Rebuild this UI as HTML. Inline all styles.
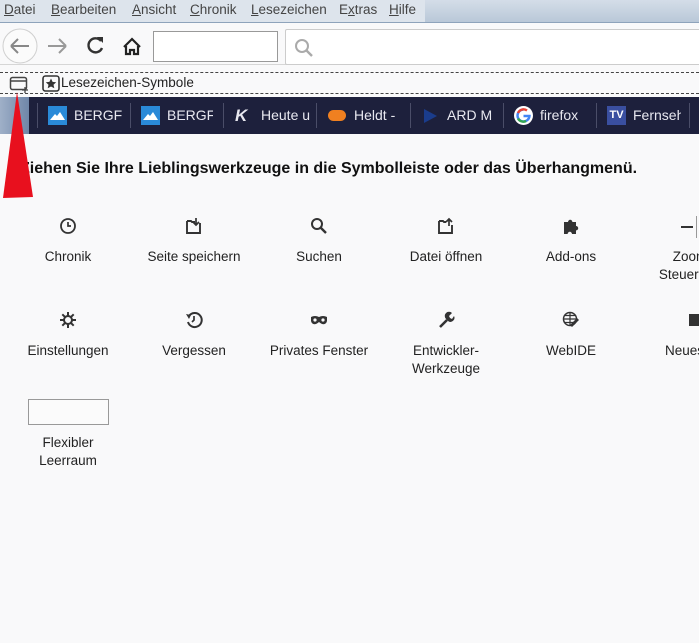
<!DOCTYPE html>
<html><head><meta charset="utf-8"><style>
*{margin:0;padding:0;box-sizing:border-box}
body{width:699px;height:643px;overflow:hidden;background:#f9f9fa;font-family:"Liberation Sans",sans-serif;position:relative;color:#222}
.a{position:absolute}
.menu{left:0;top:0;width:699px;height:23px;background:linear-gradient(#d4dde8,#b9c8d8);border-bottom:1px solid #8ea3bb}
.menu .hl{left:0;top:0;width:425px;height:22px;background:#dde4ec}
.menu span{position:absolute;top:2px;font-size:13.5px;color:#444}
.menu span u{text-decoration:underline}
.tb{left:0;top:23px;width:699px;height:42px;background:#f9f9fa;border-bottom:1px solid #d6d6d6}
.bm{left:0;top:97px;width:699px;height:37px;background:#1d203c}
.bm .it{position:absolute;top:0;height:37px;color:#e8e8f0;font-size:14px;line-height:37px}
.sep{position:absolute;top:6px;width:1px;height:25px;background:#4a4d68}
.lbl{position:absolute;font-size:13.5px;color:#222;text-align:center;width:130px;line-height:18px}
.ic{position:absolute}
</style></head><body>
<div class="a menu"><div class="a hl"></div>
<span style="left:4px"><u>D</u>atei</span>
<span style="left:51px"><u>B</u>earbeiten</span>
<span style="left:132px"><u>A</u>nsicht</span>
<span style="left:190px"><u>C</u>hronik</span>
<span style="left:251px"><u>L</u>esezeichen</span>
<span style="left:339px">E<u>x</u>tras</span>
<span style="left:389px"><u>H</u>ilfe</span>
</div>
<div class="a tb">
<svg class="a" style="left:0;top:0" width="150" height="42">
<circle cx="20" cy="23" r="17" fill="#fbfbfb" stroke="#cfcfcf"/>
<path d="M11 23H29M11 23l7-7M11 23l7 7" stroke="#888" stroke-width="2" fill="none"/>
<path d="M48 23H66M66 23l-7-7M66 23l-7 7" stroke="#999" stroke-width="2" fill="none"/>
<path d="M101 18a7 7 0 1 0 1 7" stroke="#333" stroke-width="2.4" fill="none"/><path d="M97 14h6v6z" fill="#333"/>
<path d="M124 24l8-8 8 8M126 23v8h4v-4h4v4h4v-8" stroke="#222" stroke-width="2.2" fill="none"/>
</svg>
<div class="a" style="left:153px;top:8px;width:125px;height:31px;border:1px solid #999;background:#fff"></div>
<div class="a" style="left:285px;top:6px;width:420px;height:36px;border:1px solid #ccc;background:#fff;border-radius:2px"></div>
<svg class="a" style="left:293px;top:14px" width="22" height="22"><circle cx="9" cy="9" r="6" stroke="#aaa" stroke-width="2" fill="none"/><path d="M13 13l6 6" stroke="#aaa" stroke-width="2.4"/></svg>
</div>
<div class="a" style="left:0;top:72px;width:699px;border-top:1px dashed #444"></div>
<div class="a" style="left:0;top:93px;width:699px;border-top:1px dashed #444"></div>
<svg class="a" style="left:9px;top:75px" width="22" height="18"><rect x="1.5" y="2.5" width="16" height="12" rx="2" fill="none" stroke="#444" stroke-width="1.5"/><path d="M1.5 6h16" stroke="#444" stroke-width="1.5"/><path d="M16 12v6M13 15h6" stroke="#444" stroke-width="1.3"/></svg>
<svg class="a" style="left:42px;top:75px" width="18" height="17"><rect x="1" y="1" width="16" height="15" rx="2.5" fill="none" stroke="#333" stroke-width="1.6"/><path d="M9 3.5l1.6 3.4 3.6.4-2.7 2.4.8 3.6L9 11.5l-3.3 1.8.8-3.6-2.7-2.4 3.6-.4z" fill="#333"/></svg>
<div class="a" style="left:61px;top:75px;font-size:13.5px;color:#222">Lesezeichen-Symbole</div>
<div class="a bm">
<div class="a" style="left:0;top:0;width:29px;height:37px;background:linear-gradient(90deg,#9fb0c8,#6f86a8)"></div>
<div class="sep" style="left:37px"></div>
<div class="a" style="left:48px;top:9px;width:19px;height:19px;background:#2a8ad8"><svg width="19" height="19"><path d="M2 14l5-6 2 2 3-4 5 8z" fill="#fff"/></svg></div>
<div class="it" style="left:74px;width:48px;overflow:hidden;white-space:nowrap">BERGFE</div>
<div class="sep" style="left:130px"></div>
<div class="a" style="left:141px;top:9px;width:19px;height:19px;background:#2a8ad8"><svg width="19" height="19"><path d="M2 14l5-6 2 2 3-4 5 8z" fill="#fff"/></svg></div>
<div class="it" style="left:167px;width:46px;overflow:hidden;white-space:nowrap">BERGFE</div>
<div class="sep" style="left:223px"></div>
<div class="it" style="left:235px;font-weight:bold;font-style:italic;font-size:17px">K</div>
<div class="it" style="left:261px;width:50px;overflow:hidden;white-space:nowrap">Heute u</div>
<div class="sep" style="left:316px"></div>
<div class="a" style="left:328px;top:13px;width:18px;height:11px;border-radius:6px;background:#f08020"></div>
<div class="it" style="left:354px">Heldt -</div>
<div class="sep" style="left:410px"></div>
<svg class="a" style="left:421px;top:10px" width="18" height="18"><path d="M3 2l13 7-13 7z" fill="#1a3c8c"/></svg>
<div class="it" style="left:447px;width:45px;overflow:hidden;white-space:nowrap">ARD M</div>
<div class="sep" style="left:503px"></div>
<svg class="a" style="left:514px;top:9px" width="19" height="19"><circle cx="9.5" cy="9.5" r="9.5" fill="#fff"/><path d="M9.5 3.5a6 6 0 1 0 6 6.5h-6" stroke="#4285f4" stroke-width="2.4" fill="none"/><path d="M4 7a6 6 0 0 1 9-2.5" stroke="#ea4335" stroke-width="2.4" fill="none"/><path d="M4 12.5a6 6 0 0 0 8 2.5" stroke="#34a853" stroke-width="2.4" fill="none"/></svg>
<div class="it" style="left:540px">firefox</div>
<div class="sep" style="left:596px"></div>
<div class="a" style="left:607px;top:9px;width:19px;height:19px;background:#3a4fa0;color:#fff;font-size:11px;font-weight:bold;line-height:19px;text-align:center">TV</div>
<div class="it" style="left:633px;width:48px;overflow:hidden;white-space:nowrap">Fernseh</div>
<div class="sep" style="left:689px"></div>
</div>
<div class="a" style="left:20px;top:160px;font-size:16px;font-weight:bold;color:#111;white-space:nowrap">Ziehen Sie Ihre Lieblingswerkzeuge in die Symbolleiste oder das Überhangmenü.</div>
<svg class="a" style="left:0;top:92px" width="40" height="108"><path d="M17 0L33 105L3 106z" fill="#e8101e"/></svg>

<svg class="ic" style="left:59px;top:217px" width="18" height="18"><circle cx="9" cy="9" r="7" fill="none" stroke="#333" stroke-width="1.8"/><path d="M9 5v4h3" stroke="#333" stroke-width="1.7" fill="none"/></svg>
<svg class="ic" style="left:185px;top:217px" width="18" height="18"><path d="M2 4h4l1 1h3M15 6v10H2V4" fill="none" stroke="#333" stroke-width="1.9"/><path d="M11 1v7M8 5l3 3 3-3" stroke="#333" stroke-width="1.7" fill="none"/></svg>
<svg class="ic" style="left:310px;top:217px" width="18" height="18"><circle cx="7" cy="7" r="5" fill="none" stroke="#333" stroke-width="2"/><path d="M11 11l5 5" stroke="#333" stroke-width="2.4"/></svg>
<svg class="ic" style="left:437px;top:217px" width="18" height="18"><path d="M2 4h4l1 1h2M15 8v8H2V4" fill="none" stroke="#333" stroke-width="1.9"/><path d="M12 9V2M9 5l3-3 3 3" stroke="#333" stroke-width="1.7" fill="none"/></svg>
<svg class="ic" style="left:562px;top:217px" width="18" height="18"><path d="M2 5h4a2.2 2.2 0 1 1 4.4 0H14v4a2.2 2.2 0 1 1 0 4.4V17H10a2.2 2.2 0 1 0-4.4 0H2z" fill="#333"/></svg>
<div class="a" style="left:681px;top:226px;width:12px;height:2px;background:#333"></div>
<div class="a" style="left:696px;top:216px;width:1px;height:22px;background:#999"></div>
<div class="lbl" style="left:3px;top:248px">Chronik</div>
<div class="lbl" style="left:129px;top:248px">Seite speichern</div>
<div class="lbl" style="left:254px;top:248px">Suchen</div>
<div class="lbl" style="left:381px;top:248px">Datei öffnen</div>
<div class="lbl" style="left:506px;top:248px">Add-ons</div>
<div class="lbl" style="left:625px;top:248px">Zoom<br>Steuerung</div>
<svg class="ic" style="left:59px;top:311px" width="18" height="18"><circle cx="9" cy="9" r="4" fill="none" stroke="#333" stroke-width="2"/><path d="M9 1v4M9 13v4M1 9h4M13 9h4M3.3 3.3l2.8 2.8M11.9 11.9l2.8 2.8M3.3 14.7l2.8-2.8M11.9 6.1l2.8-2.8" stroke="#333" stroke-width="2"/></svg>
<svg class="ic" style="left:185px;top:311px" width="18" height="18"><path d="M4 5a7 7 0 1 1-1 6" fill="none" stroke="#333" stroke-width="2"/><path d="M1 3l5 1-2 4z" fill="#333"/><path d="M9 5v4l-2 2" stroke="#333" stroke-width="1.7" fill="none"/></svg>
<svg class="ic" style="left:310px;top:311px" width="18" height="18"><path d="M1 6q4-2 8 0q4-2 8 0v4q-1 4-5 3q-2-1-3-2q-1 1-3 2q-4 1-5-3z" fill="#333"/><circle cx="5" cy="9" r="1.6" fill="#f9f9fa"/><circle cx="13" cy="9" r="1.6" fill="#f9f9fa"/></svg>
<svg class="ic" style="left:437px;top:311px" width="18" height="18"><path d="M3 16l7-7" stroke="#333" stroke-width="2.6"/><path d="M9 8a4 4 0 0 1 6-6l-3 3 1 2 2 1 2-3a4 4 0 0 1-6 5z" fill="#333"/></svg>
<svg class="ic" style="left:562px;top:311px" width="18" height="18"><circle cx="8" cy="8" r="6.5" fill="none" stroke="#333" stroke-width="1.5"/><path d="M1.5 8h13M8 1.5v13M3 4.5h10M3 11.5h10" stroke="#333" stroke-width="1.2"/><path d="M10 16l7-7-2-2-7 7z" fill="#333"/></svg>
<div class="a" style="left:689px;top:314px;width:10px;height:12px;background:#333"></div>
<div class="lbl" style="left:3px;top:342px">Einstellungen</div>
<div class="lbl" style="left:129px;top:342px">Vergessen</div>
<div class="lbl" style="left:254px;top:342px">Privates Fenster</div>
<div class="lbl" style="left:381px;top:342px">Entwickler-<br>Werkzeuge</div>
<div class="lbl" style="left:506px;top:342px">WebIDE</div>
<div class="lbl" style="left:665px;top:342px;text-align:left;width:60px">Neues</div>
<div class="a" style="left:28px;top:399px;width:81px;height:26px;border:1px solid #999;background:#fbfbfb"></div>
<div class="lbl" style="left:3px;top:434px">Flexibler<br>Leerraum</div>
</body></html>
